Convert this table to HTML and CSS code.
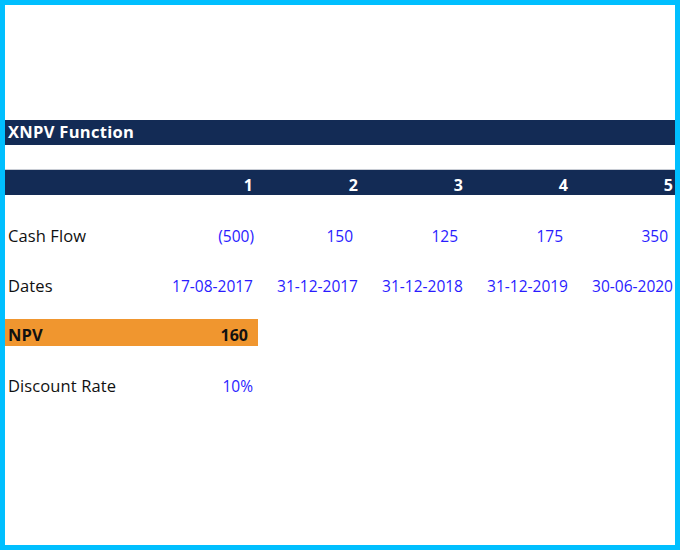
FILE: index.html
```html
<!DOCTYPE html>
<html>
<head>
<meta charset="utf-8">
<link rel="stylesheet" href="styles.css">
</head>
<body>
<div class="frame">
  <div class="sheet">
    <div class="spacer top"></div>
    <div class="row title"><div class="cell label">XNPV Function</div></div>
    <div class="spacer g24"></div>
    <div class="row header">
      <div class="cell label"></div>
      <div class="cell num">1</div>
      <div class="cell num">2</div>
      <div class="cell num">3</div>
      <div class="cell num">4</div>
      <div class="cell num">5</div>
    </div>
    <div class="spacer g25"></div>
    <div class="row data">
      <div class="cell label">Cash Flow</div>
      <div class="cell num input neg">(500)</div>
      <div class="cell num input pos">150</div>
      <div class="cell num input pos">125</div>
      <div class="cell num input pos">175</div>
      <div class="cell num input pos">350</div>
    </div>
    <div class="spacer g24"></div>
    <div class="row data">
      <div class="cell label">Dates</div>
      <div class="cell num input">17-08-2017</div>
      <div class="cell num input">31-12-2017</div>
      <div class="cell num input">31-12-2018</div>
      <div class="cell num input">31-12-2019</div>
      <div class="cell num input">30-06-2020</div>
    </div>
    <div class="spacer g23"></div>
    <div class="row npv">
      <div class="npv-bar">
        <div class="cell label">NPV</div>
        <div class="cell num pos">160</div>
      </div>
    </div>
    <div class="spacer g24"></div>
    <div class="row data">
      <div class="cell label">Discount Rate</div>
      <div class="cell num input">10%</div>
    </div>
  </div>
</div>
</body>
</html>
```

FILE: styles.css
```css
html, body {
  margin: 0;
  padding: 0;
  background: #ffffff;
}

.frame {
  width: 680px;
  height: 550px;
  box-sizing: border-box;
  border: 5px solid #00bfff;
  overflow: hidden;
  background: #ffffff;
}

.sheet {
  width: 670px;
  font-family: "Open Sans", "Noto Sans", sans-serif;
  font-size: 15.5px;
  line-height: 20px;
  color: #111111;
}

.spacer.top { height: 115px; }
.spacer.g23 { height: 23px; }
.spacer.g24 { height: 24px; }
.spacer.g25 { height: 25px; }

.row {
  display: grid;
  grid-template-columns: 148px repeat(5, 105px);
  box-sizing: border-box;
}

.cell {
  box-sizing: border-box;
  white-space: nowrap;
}

.label {
  padding-left: 3px;
  font-size: 16.5px;
  letter-spacing: 0.1px;
}

.num {
  text-align: right;
  padding-right: 5px;
}

.num.pos { padding-right: 10px; }
.num.neg { padding-right: 4px; }

.input { color: #2a1cff; }

.title {
  display: block;
  height: 25px;
  background: #132b55;
  color: #ffffff;
  font-weight: 700;
  padding-top: 2px;
}

.title .label {
  font-size: 16.5px;
  letter-spacing: 0.3px;
}

.header {
  height: 26px;
  background: #132b55;
  color: #ffffff;
  font-weight: 700;
  padding-top: 5px;
  border-top: 1px solid #c8ccd4;
}

.header .num { font-size: 16px; }

.data {
  height: 26px;
  padding-top: 6px;
}

.data:first-of-type { padding-top: 5px; }

.npv {
  height: 27px;
  display: block;
}

.npv-bar {
  width: 253px;
  height: 27px;
  box-sizing: border-box;
  padding-top: 6px;
  background: #f0962f;
  font-weight: 700;
  display: grid;
  grid-template-columns: 148px 105px;
}

.npv-bar .num { font-size: 16px; }
```
